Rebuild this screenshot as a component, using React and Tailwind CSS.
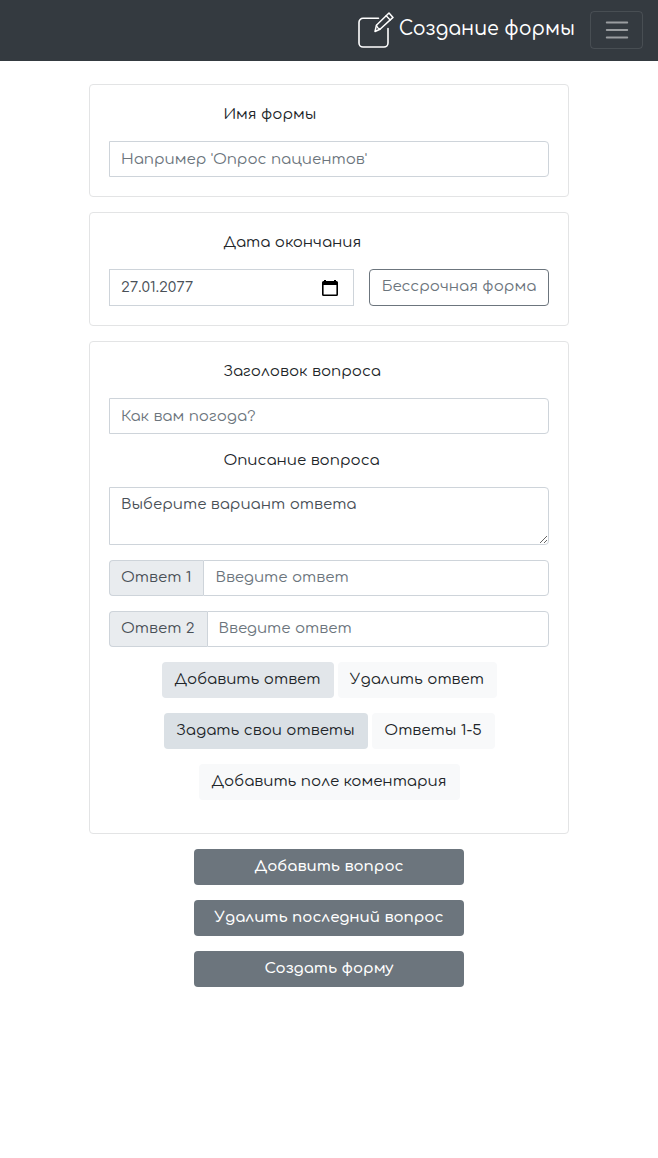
import React from "react";

const field =
  "block w-full min-w-0 border border-[#ced4da] bg-white px-[11px] text-[#495057] placeholder:text-[#6c757d] placeholder:opacity-100 focus:outline-none focus:border-[#80bdff]";
const softButton =
  "h-9 rounded px-3 text-[#212529] whitespace-nowrap hover:bg-[#e2e6ea]";
const solidButton =
  "h-9 w-full rounded bg-[#6c757d] font-semibold text-white hover:bg-[#5a6268]";

function Card({ children }) {
  return (
    <section className="flex w-full flex-col gap-[15px] rounded border border-[#e3e4e5] bg-white px-[19px] pt-[18px] pb-[19px]">
      {children}
    </section>
  );
}

function FieldLabel({ htmlFor, children }) {
  return (
    <label htmlFor={htmlFor} className="-mb-px block pl-[26%] leading-6 text-[#212529]">
      {children}
    </label>
  );
}

function AnswerRow({ number }) {
  const id = `answer-${number}`;
  return (
    <div className="flex h-9">
      <label
        htmlFor={id}
        className="flex shrink-0 items-center rounded-l border border-r-0 border-[#ced4da] bg-[#e9ecef] pr-3 pl-[11px] text-[#495057]"
      >
        Ответ {number}
      </label>
      <input id={id} type="text" placeholder="Введите ответ" className={`${field} flex-1 rounded-r`} />
    </div>
  );
}

function EditIcon() {
  return (
    <svg viewBox="0 0 36 36" className="size-9" fill="none" stroke="currentColor" strokeWidth="1.6" strokeLinecap="round" strokeLinejoin="round" aria-hidden="true">
      <path d="M20.5 6.3H5A4 4 0 0 0 1 10.3V31a4 4 0 0 0 4 4h21a4 4 0 0 0 4-4V16.5" />
      <path d="M31 1l4 4.400L22 17.200l-5 2.300 1.400-6.200z" strokeWidth="1.5" />
      <path d="M18.400 13.300l1.300 2.400 2.300 1.500M28.200 3.800l4 4.200" strokeWidth="1.3" />
    </svg>
  );
}

export default function App() {
  return (
    <div className="font-['Comfortaa','Inter',sans-serif] text-[15px]">
      <header className="flex h-[61px] items-center justify-end gap-[15px] bg-[#343a40] px-[15px] pb-px text-white">
        <a href="#" className="flex items-center gap-[5px]">
          <EditIcon />
          <span className="pb-[3px] text-[19px] leading-7 font-medium">Создание формы</span>
        </a>
        <button type="button" aria-label="Меню" className="flex h-[38px] w-[53px] items-center justify-center rounded border border-white/10 text-white/50">
          <svg viewBox="0 0 30 30" className="size-7" fill="none" stroke="currentColor" strokeWidth="2" strokeLinecap="round" strokeMiterlimit="10" aria-hidden="true">
            <path d="M4 7h22M4 15h22M4 23h22" />
          </svg>
        </button>
      </header>

      <main className="px-4 pt-[23px] pb-8">
        <form className="mx-auto flex w-full max-w-[480px] flex-col items-center gap-[15px]" onSubmit={(e) => e.preventDefault()}>
          <Card>
            <FieldLabel htmlFor="form-name">Имя формы</FieldLabel>
            <input id="form-name" type="text" placeholder="Например 'Опрос пациентов'" className={`${field} h-9 rounded-r`} />
          </Card>

          <Card>
            <FieldLabel htmlFor="end-date">Дата окончания</FieldLabel>
            <div className="flex gap-[15px]">
              <div className="flex h-[37px] min-w-0 flex-1 items-center border border-[#ced4da] pr-[15px]">
                <input id="end-date" type="text" inputMode="numeric" defaultValue="27.01.2077" className="h-full min-w-0 flex-1 bg-transparent px-[11px] text-[#495057] tabular-nums [font-kerning:none] focus:outline-none" />
                <button type="button" aria-label="Открыть календарь" className="text-black">
                  <svg viewBox="0 0 16 18" className="h-[18px] w-4" aria-hidden="true">
                    <path fill="currentColor" fillRule="evenodd" d="M2 1h2v1h8V1h2v1h.5A1.500 1.500 0 0 1 16 3.500v12a1.500 1.500 0 0 1-1.500 1.500h-13A1.500 1.500 0 0 1 0 15.500v-12A1.500 1.500 0 0 1 1.500 2H2zM1.600 6v9.400h12.800V6z" />
                  </svg>
                </button>
              </div>
              <button type="button" className="h-[37px] w-[180px] shrink-0 rounded border border-[#6c757d] whitespace-nowrap text-[#6c757d] hover:bg-[#6c757d] hover:text-white">
                Бессрочная форма
              </button>
            </div>
          </Card>

          <Card>
            <FieldLabel htmlFor="question-title">Заголовок вопроса</FieldLabel>
            <input id="question-title" type="text" placeholder="Как вам погода?" className={`${field} h-9 rounded-r`} />
            <FieldLabel htmlFor="question-text">Описание вопроса</FieldLabel>
            <textarea id="question-text" defaultValue="Выберите вариант ответа" className={`${field} h-[58px] rounded-r py-[6px] leading-[22px]`} />
            <AnswerRow number={1} />
            <AnswerRow number={2} />
            <div className="flex flex-wrap justify-center gap-1">
              <button type="button" className={`${softButton} w-[172px] bg-[#e2e6ea]`}>Добавить ответ</button>
              <button type="button" className={`${softButton} w-[159px] bg-[#f8f9fa]`}>Удалить ответ</button>
            </div>
            <div className="flex flex-wrap justify-center gap-1">
              <button type="button" className={`${softButton} w-[204px] bg-[#dae0e5]`}>Задать свои ответы</button>
              <button type="button" className={`${softButton} w-[123px] bg-[#f8f9fa]`}>Ответы 1-5</button>
            </div>
            <div className="flex justify-center pb-[14px]">
              <button type="button" className={`${softButton} w-[261px] bg-[#f8f9fa]`}>Добавить поле коментария</button>
            </div>
          </Card>

          <div className="flex w-full max-w-[270px] flex-col gap-[15px]">
            <button type="button" className={solidButton}>Добавить вопрос</button>
            <button type="button" className={solidButton}>Удалить последний вопрос</button>
            <button type="submit" className={solidButton}>Создать форму</button>
          </div>
        </form>
      </main>
    </div>
  );
}
